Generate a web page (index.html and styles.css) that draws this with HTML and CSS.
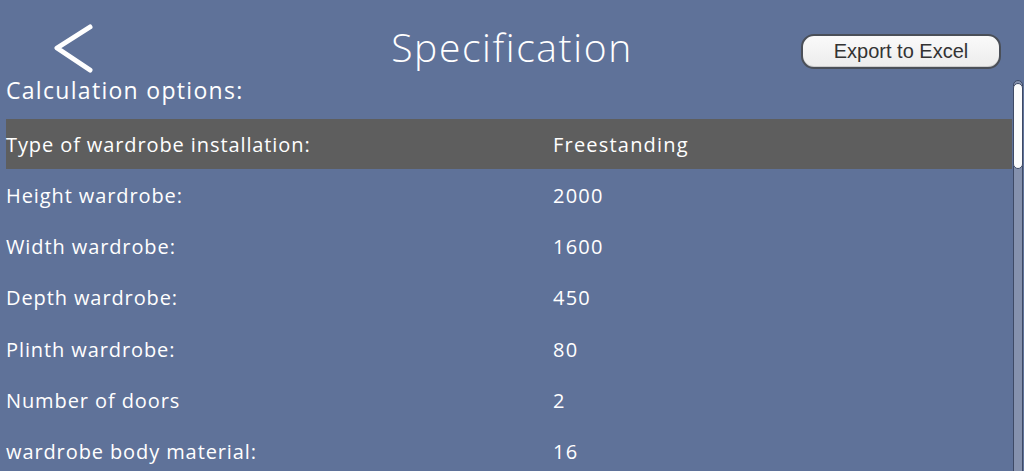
FILE: index.html
```html
<!DOCTYPE html>
<html>
<head>
<meta charset="utf-8">
<link rel="stylesheet" href="styles.css">
</head>
<body>
<div class="screen">
  <header class="topbar">
    <div class="left">
      <svg class="back" width="42" height="52" viewBox="0 0 42 52">
        <path d="M37 5 L4 26 L37 48" fill="none" stroke="#fff" stroke-width="5" stroke-linecap="round" stroke-linejoin="round"/>
      </svg>
    </div>
    <h1 class="title">Specification</h1>
    <div class="right">
      <button class="export">Export to Excel</button>
    </div>
  </header>
  <main class="body">
    <div class="content">
      <h2 class="section">Calculation options:</h2>
      <div class="row alt"><span class="label">Type of wardrobe installation:</span><span class="value">Freestanding</span></div>
      <div class="row"><span class="label">Height wardrobe:</span><span class="value">2000</span></div>
      <div class="row"><span class="label">Width wardrobe:</span><span class="value">1600</span></div>
      <div class="row"><span class="label">Depth wardrobe:</span><span class="value">450</span></div>
      <div class="row"><span class="label">Plinth wardrobe:</span><span class="value">80</span></div>
      <div class="row"><span class="label">Number of doors</span><span class="value">2</span></div>
      <div class="row"><span class="label">wardrobe body material:</span><span class="value">16</span></div>
    </div>
    <div class="scrollbar"><div class="thumb"></div></div>
  </main>
</div>
</body>
</html>
```

FILE: styles.css
```css
html, body {
  margin: 0;
  padding: 0;
}
body {
  background: #5f7299;
  font-family: "Open Sans", "Noto Sans", sans-serif;
  color: #fff;
  overflow: hidden;
}
.screen {
  width: 1024px;
  height: 471px;
  overflow: hidden;
  display: flex;
  flex-direction: column;
}
.topbar {
  height: 80px;
  display: grid;
  grid-template-columns: 1fr auto 1fr;
  align-items: start;
}
.left {
  padding: 22px 0 0 53px;
}
.back {
  display: block;
}
.title {
  margin: 0;
  padding-top: 22px;
  font-weight: 300;
  font-size: 39px;
  line-height: 50px;
  letter-spacing: 1.6px;
  color: #fff;
}
.right {
  display: flex;
  justify-content: flex-end;
  padding: 34px 23px 0 0;
}
.export {
  width: 200px;
  height: 35px;
  background: linear-gradient(#fafafa, #ececec);
  border: 2px solid #4a4f58;
  border-radius: 13px;
  font-family: "Liberation Sans", Arial, sans-serif;
  font-size: 20px;
  color: #333;
  padding: 0;
  box-shadow: inset 0 -1px 0 #ccc;
}
.body {
  flex: 1;
  display: flex;
  min-height: 0;
}
.content {
  flex: 1;
  padding-left: 6px;
}
.section {
  margin: 0;
  height: 39px;
  font-weight: 500;
  font-size: 23px;
  line-height: 20px;
  letter-spacing: 1.3px;
}
.row {
  height: 51.2px;
  display: flex;
  align-items: center;
  font-size: 20px;
  letter-spacing: 0.9px;
}
.row.alt {
  background: #5e5e5e;
  height: 50px;
  margin-bottom: 1px;
}
.label {
  width: 547px;
  flex: none;
}
.value {
  letter-spacing: 1.2px;
}
.scrollbar {
  width: 8px;
  margin: 0 1px 0 1px;
  background: #8591ad;
  border: 1px solid #3e4a66;
  border-radius: 6px 6px 0 0;
  position: relative;
  height: 400px;
}
.thumb {
  position: absolute;
  left: -1px;
  right: -1px;
  top: 2px;
  height: 84px;
  background: #fcfcfc;
  border: 1px solid #3e4a66;
  border-radius: 6px;
}
```
